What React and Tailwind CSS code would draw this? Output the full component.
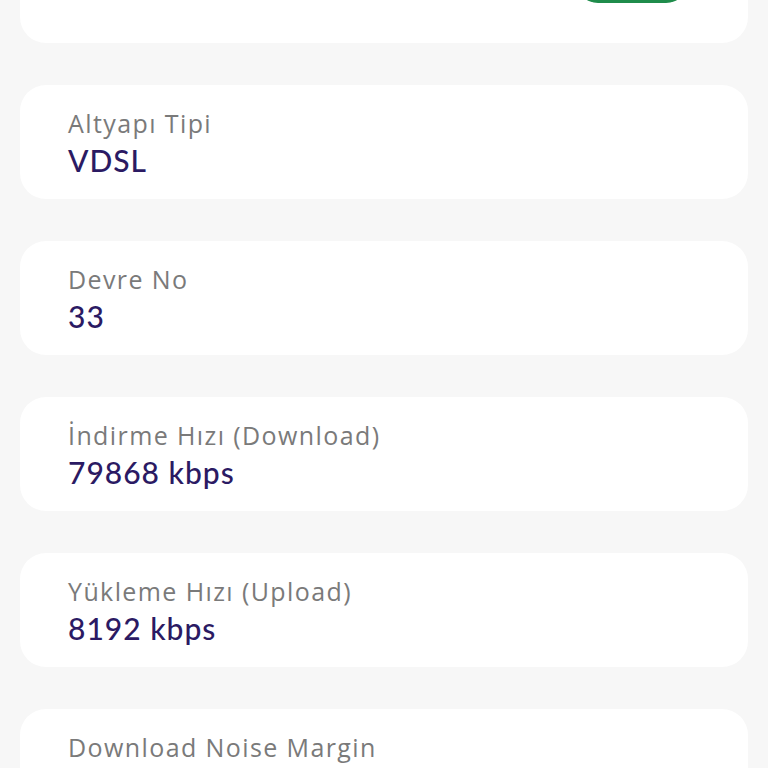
import React from "react";

const rows = [
  { label: "Altyapı Tipi", value: "VDSL" },
  { label: "Devre No", value: "33" },
  { label: "İndirme Hızı (Download)", value: "79868 kbps" },
  { label: "Yükleme Hızı (Upload)", value: "8192 kbps" },
  { label: "Download Noise Margin", value: "" },
];

export default function App() {
  return (
    <div className="h-[768px] overflow-hidden bg-[#f7f7f7] px-5">
      <div className="-mt-[71px] flex flex-col gap-[42px]">
        <div className="flex h-[114px] items-end justify-end rounded-[26px] bg-white pb-[40px] pr-[60px]">
          <button className="h-[44px] w-[112px] rounded-full bg-[#1f8c4b]"></button>
        </div>
        {rows.map((row) => (
          <div
            key={row.label}
            className="flex h-[114px] flex-col justify-center rounded-[26px] bg-white pl-12"
          >
            <span className="font-['Open_Sans',Lato,sans-serif] text-[25px] leading-[36px] tracking-[1.4px] text-[#7a7a7a]">
              {row.label}
            </span>
            <span className="h-[38px] font-['Lato','Open_Sans',sans-serif] text-[30px] leading-[38px] font-medium tracking-[1px] text-[#2b1a63]">
              {row.value}
            </span>
          </div>
        ))}
      </div>
    </div>
  );
}
